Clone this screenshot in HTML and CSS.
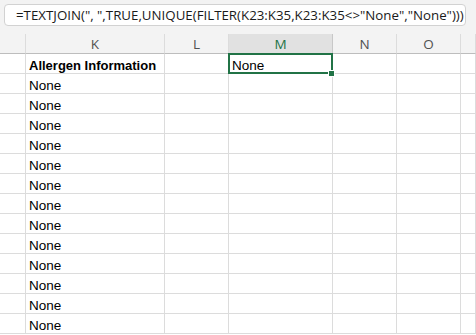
FILE: index.html
```html
<!DOCTYPE html>
<html>
<head>
    <title>Allergen Information</title>
    <link rel="stylesheet" href="styles.css">
</head>
<body>

<div class="formula-area">
    <div class="formula-box">=TEXTJOIN(", ",TRUE,UNIQUE(FILTER(K23:K35,K23:K35&lt;&gt;"None","None")))</div>
</div>

<div class="sheet">
    <div class="col-head"></div>
    <div class="col-head">K</div>
    <div class="col-head">L</div>
    <div class="col-head active">M</div>
    <div class="col-head">N</div>
    <div class="col-head">O</div>
    <div class="col-head"></div>

    <div class="cell"></div>
    <div class="cell bold">Allergen Information</div>
    <div class="cell"></div>
    <div class="cell selected">None<span class="handle"></span></div>
    <div class="cell"></div>
    <div class="cell"></div>
    <div class="cell"></div>

    <div class="cell"></div><div class="cell">None</div><div class="cell"></div><div class="cell"></div><div class="cell"></div><div class="cell"></div><div class="cell"></div>
    <div class="cell"></div><div class="cell">None</div><div class="cell"></div><div class="cell"></div><div class="cell"></div><div class="cell"></div><div class="cell"></div>
    <div class="cell"></div><div class="cell">None</div><div class="cell"></div><div class="cell"></div><div class="cell"></div><div class="cell"></div><div class="cell"></div>
    <div class="cell"></div><div class="cell">None</div><div class="cell"></div><div class="cell"></div><div class="cell"></div><div class="cell"></div><div class="cell"></div>
    <div class="cell"></div><div class="cell">None</div><div class="cell"></div><div class="cell"></div><div class="cell"></div><div class="cell"></div><div class="cell"></div>
    <div class="cell"></div><div class="cell">None</div><div class="cell"></div><div class="cell"></div><div class="cell"></div><div class="cell"></div><div class="cell"></div>
    <div class="cell"></div><div class="cell">None</div><div class="cell"></div><div class="cell"></div><div class="cell"></div><div class="cell"></div><div class="cell"></div>
    <div class="cell"></div><div class="cell">None</div><div class="cell"></div><div class="cell"></div><div class="cell"></div><div class="cell"></div><div class="cell"></div>
    <div class="cell"></div><div class="cell">None</div><div class="cell"></div><div class="cell"></div><div class="cell"></div><div class="cell"></div><div class="cell"></div>
    <div class="cell"></div><div class="cell">None</div><div class="cell"></div><div class="cell"></div><div class="cell"></div><div class="cell"></div><div class="cell"></div>
    <div class="cell"></div><div class="cell">None</div><div class="cell"></div><div class="cell"></div><div class="cell"></div><div class="cell"></div><div class="cell"></div>
    <div class="cell"></div><div class="cell">None</div><div class="cell"></div><div class="cell"></div><div class="cell"></div><div class="cell"></div><div class="cell"></div>
    <div class="cell"></div><div class="cell">None</div><div class="cell"></div><div class="cell"></div><div class="cell"></div><div class="cell"></div><div class="cell"></div>
</div>

</body>
</html>
```

FILE: styles.css
```css
body {
    margin: 0;
    width: 476px;
    height: 335px;
    overflow: hidden;
    background-color: #fff;
    font-family: 'Liberation Sans', Arial, sans-serif;
}

.formula-area {
    background-color: #f3f3f3;
    height: 34px;
    padding: 4px 10px 0 4px;
    box-sizing: border-box;
}

.formula-box {
    height: 22px;
    background-color: #fff;
    border: 1px solid #d2d2d2;
    border-radius: 4px;
    box-sizing: border-box;
    padding-left: 11px;
    font-family: 'Open Sans', sans-serif;
    font-size: 13.3px;
    line-height: 20px;
    color: #1a1a1a;
    white-space: nowrap;
    overflow: hidden;
}

.sheet {
    display: grid;
    grid-template-columns: 26px 139px 64px 104px 64px 64px 1fr;
    grid-auto-rows: 20px;
}

.col-head {
    background-color: #f3f3f3;
    border-right: 1px solid #dcdcdc;
    border-bottom: 1px solid #bdbdbd;
    box-sizing: border-box;
    display: flex;
    align-items: center;
    justify-content: center;
    font-family: 'Open Sans', sans-serif;
    font-size: 13.5px;
    color: #505050;
}

.col-head.active {
    background-color: #e1e1e1;
    color: #217346;
    border-right-color: #c8c8c8;
}

.cell {
    position: relative;
    border-right: 1px solid #dcdcdc;
    border-bottom: 1px solid #dcdcdc;
    box-sizing: border-box;
    padding: 0 3px;
    display: flex;
    align-items: flex-end;
    font-size: 13.5px;
    line-height: 15px;
    color: #000;
    white-space: nowrap;
}

.bold {
    font-weight: bold;
    font-size: 13px;
}

.selected::after {
    content: "";
    position: absolute;
    top: -1px;
    left: -1px;
    right: -1px;
    bottom: -1px;
    border: 2px solid #217346;
}

.handle {
    position: absolute;
    right: -3px;
    bottom: -4px;
    width: 5px;
    height: 5px;
    background-color: #217346;
    border: 1px solid #fff;
    z-index: 2;
}
```
